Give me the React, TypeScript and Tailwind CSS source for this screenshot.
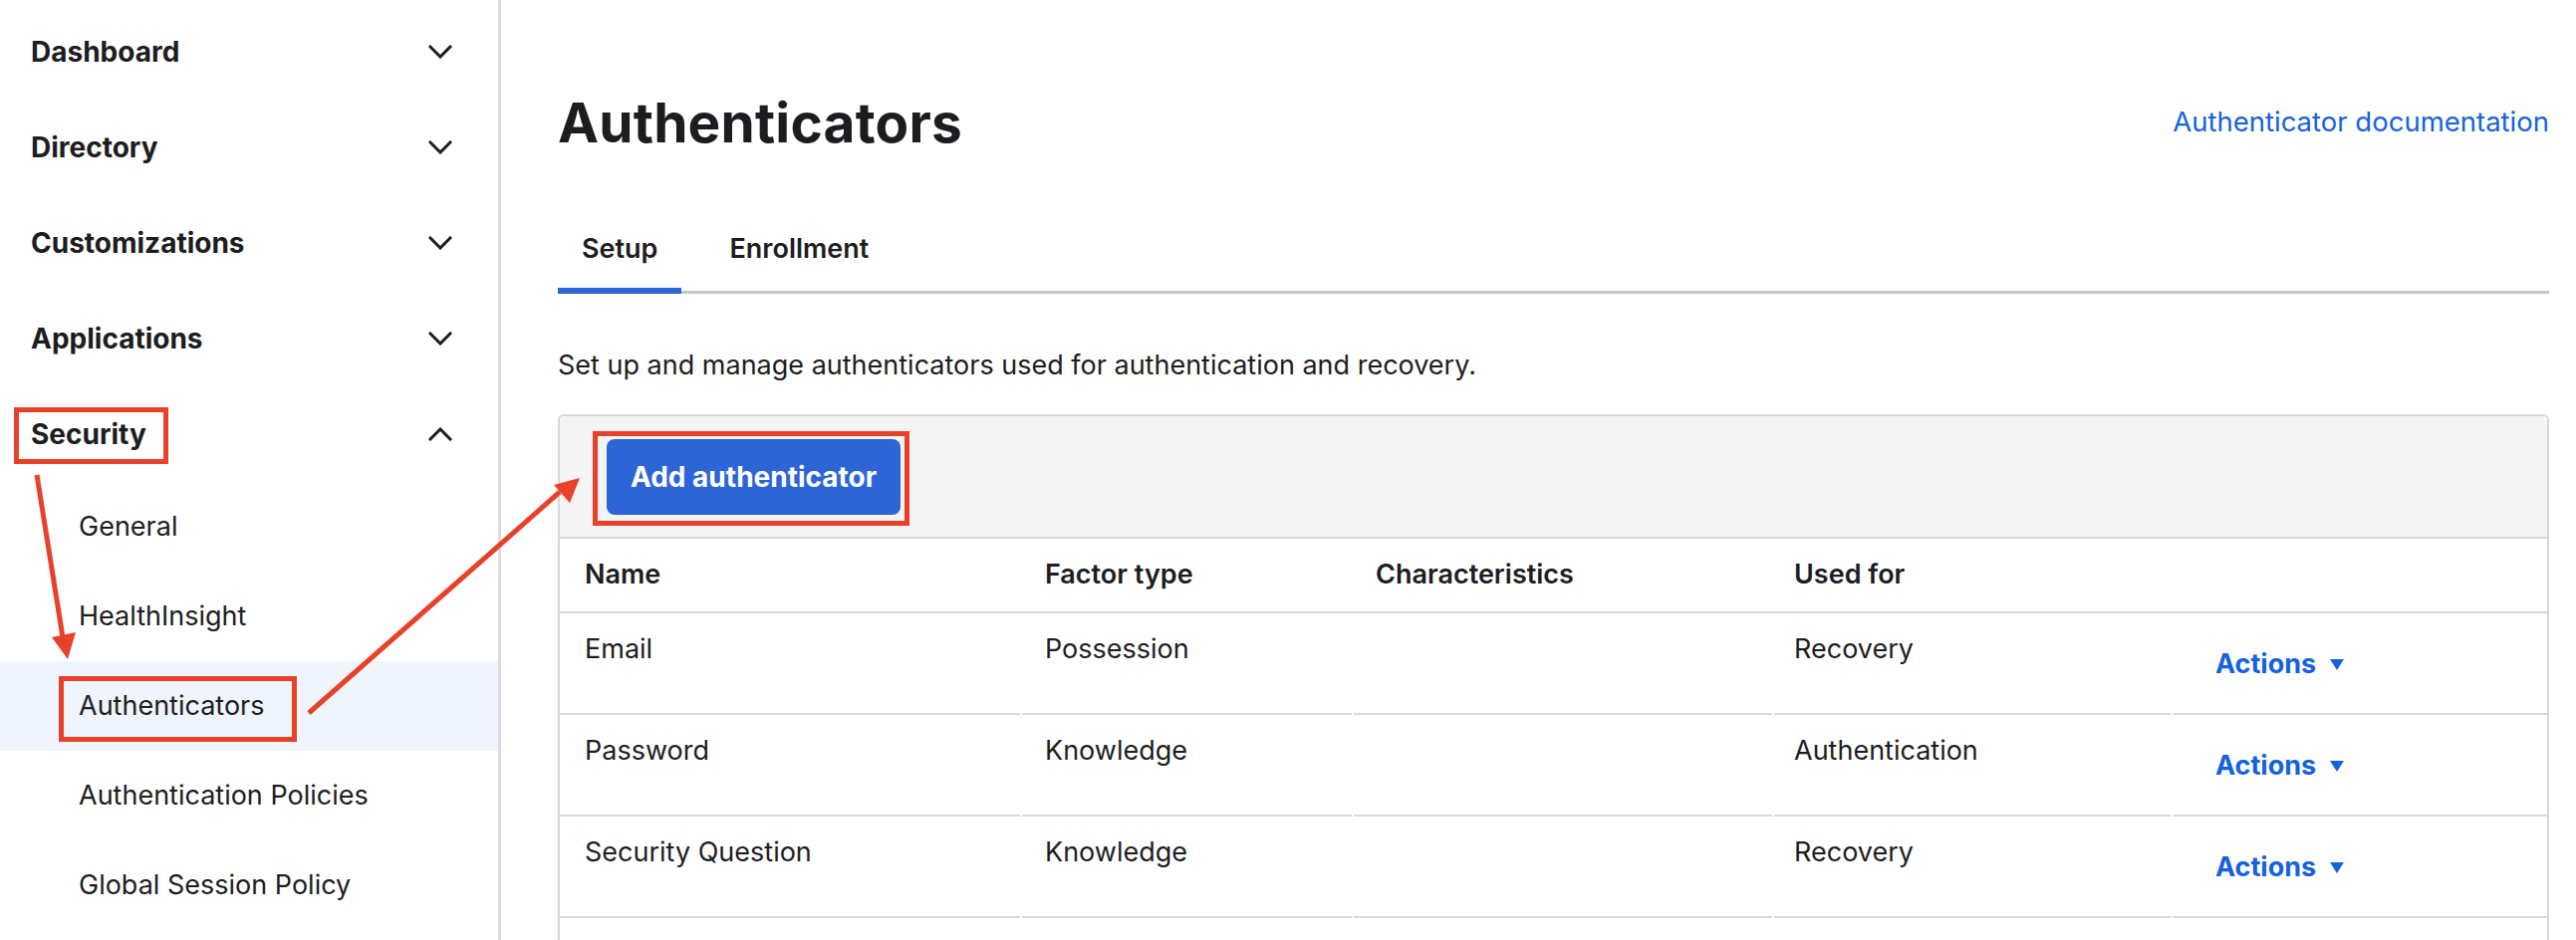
import React from 'react';

const topNav = ['Dashboard', 'Directory', 'Customizations', 'Applications'];
const securityNav = ['General', 'HealthInsight', 'Authenticators', 'Authentication Policies', 'Global Session Policy'];

const rows = [
  { name: 'Email', factor: 'Possession', usedFor: 'Recovery' },
  { name: 'Password', factor: 'Knowledge', usedFor: 'Authentication' },
  { name: 'Security Question', factor: 'Knowledge', usedFor: 'Recovery' },
];

const Chevron: React.FC<{ up?: boolean }> = ({ up }) => (
  <svg width="24" height="14" viewBox="0 0 24 14" fill="none" stroke="#1d1d21" strokeWidth={3} strokeLinecap="square">
    {up ? <path d="M2 12L12 2L22 12" /> : <path d="M2 2L12 12L22 2" />}
  </svg>
);

const Annotations: React.FC = () => (
  <svg className="pointer-events-none absolute inset-0" width="2586" height="944" viewBox="0 0 2586 944" fill="none">
    {/* boxes */}
    <rect x="16.5" y="411.5" width="150" height="52" stroke="#e8412a" strokeWidth={5} />
    <rect x="61.5" y="681.5" width="234" height="61" stroke="#e8412a" strokeWidth={5} />
    <rect x="597.5" y="435.5" width="313" height="90" stroke="#e8412a" strokeWidth={5} />
    {/* arrow: Security -> Authenticators */}
    <line x1="37" y1="477" x2="63" y2="640" stroke="#e8412a" strokeWidth={5} />
    <polygon points="52,640 76,635 68,662" fill="#e8412a" />
    {/* arrow: Authenticators -> Add authenticator */}
    <line x1="310" y1="716" x2="562" y2="494" stroke="#e8412a" strokeWidth={5} />
    <polygon points="582,480 556,487 572,505" fill="#e8412a" />
  </svg>
);

export default function App() {
  return (
    <div
      className="relative flex h-[944px] w-[2586px] overflow-hidden bg-white text-[#1d1d21]"
      style={{ fontFamily: 'Inter, "Noto Sans", sans-serif' }}
    >
      {/* Sidebar */}
      <aside className="w-[503px] shrink-0 border-r-[3px] border-[#dcdce0] pt-[4px]">
        {topNav.map((item) => (
          <div key={item} className="flex h-[96px] items-center justify-between pl-[31px] pr-[46px]">
            <span className="text-[28px] font-bold">{item}</span>
            <Chevron />
          </div>
        ))}
        <div className="flex h-[96px] items-center justify-between pl-[31px] pr-[46px]">
          <span className="text-[28px] font-bold">Security</span>
          <Chevron up />
        </div>
        {securityNav.map((item) => (
          <div
            key={item}
            className={`flex h-[90px] items-center pl-[79px] text-[27px] ${item === 'Authenticators' ? 'bg-[#f0f4fd]' : ''}`}
          >
            {item}
          </div>
        ))}
      </aside>

      {/* Main */}
      <main className="flex-1 pl-[57px] pr-[27px] pt-[80px]">
        <div className="flex h-[86px] items-center justify-between">
          <h1 className="text-[55px] font-bold leading-none tracking-[0.2px]">Authenticators</h1>
          <a className="text-[27.5px] text-[#1662dd]">Authenticator documentation</a>
        </div>

        {/* Tabs */}
        <div className="mt-[45px] flex gap-[24px] border-b-[3px] border-[#c6c6cc]">
          <div className="-mb-[3px] flex h-[84px] items-center border-b-[6px] border-[#2d64d6] px-[24px] text-[27px] font-semibold">
            Setup
          </div>
          <div className="-mb-[3px] flex h-[84px] items-center border-b-[6px] border-transparent px-[24px] text-[27px] font-semibold">
            Enrollment
          </div>
        </div>

        <p className="mt-[52px] text-[27px] leading-[40px]">
          Set up and manage authenticators used for authentication and recovery.
        </p>

        {/* Table */}
        <div className="mt-[29px] h-[600px] rounded-[6px] border-2 border-[#d7d7dc]">
          <div className="flex h-[123px] items-center rounded-t-[6px] border-b-2 border-[#d7d7dc] bg-[#f4f4f4] px-[47px]">
            <button className="h-[76px] w-[295px] rounded-[8px] bg-[#2d64d6] text-[28px] font-bold text-white">
              Add authenticator
            </button>
          </div>

          <div className="grid h-[75px] grid-cols-[462px_331px_420px_398px_1fr] items-center border-b-2 border-[#d7d7dc] text-[27px] font-semibold">
            <div className="pl-[25px]">Name</div>
            <div className="pl-[25px]">Factor type</div>
            <div className="pl-[26px]">Characteristics</div>
            <div className="pl-[26px]">Used for</div>
            <div />
          </div>

          {rows.map((row) => (
            <div
              key={row.name}
              className="grid h-[102px] grid-cols-[462px_331px_420px_398px_1fr] gap-x-[2px] text-[27px] leading-[40px]"
            >
              <div className="border-b-2 border-[#d7d7dc] pl-[25px] pt-[16px]">{row.name}</div>
              <div className="border-b-2 border-[#d7d7dc] pl-[23px] pt-[16px]">{row.factor}</div>
              <div className="border-b-2 border-[#d7d7dc]" />
              <div className="border-b-2 border-[#d7d7dc] pl-[20px] pt-[16px]">{row.usedFor}</div>
              <div className="border-b-2 border-[#d7d7dc] pl-[43px] pt-[31px]">
                <span className="inline-flex items-center gap-[14px] font-bold text-[#1662dd]">
                  Actions
                  <svg width="14" height="11" viewBox="0 0 14 11">
                    <polygon points="0,0 14,0 7,11" fill="#1662dd" />
                  </svg>
                </span>
              </div>
            </div>
          ))}
        </div>
      </main>

      <Annotations />
    </div>
  );
}
